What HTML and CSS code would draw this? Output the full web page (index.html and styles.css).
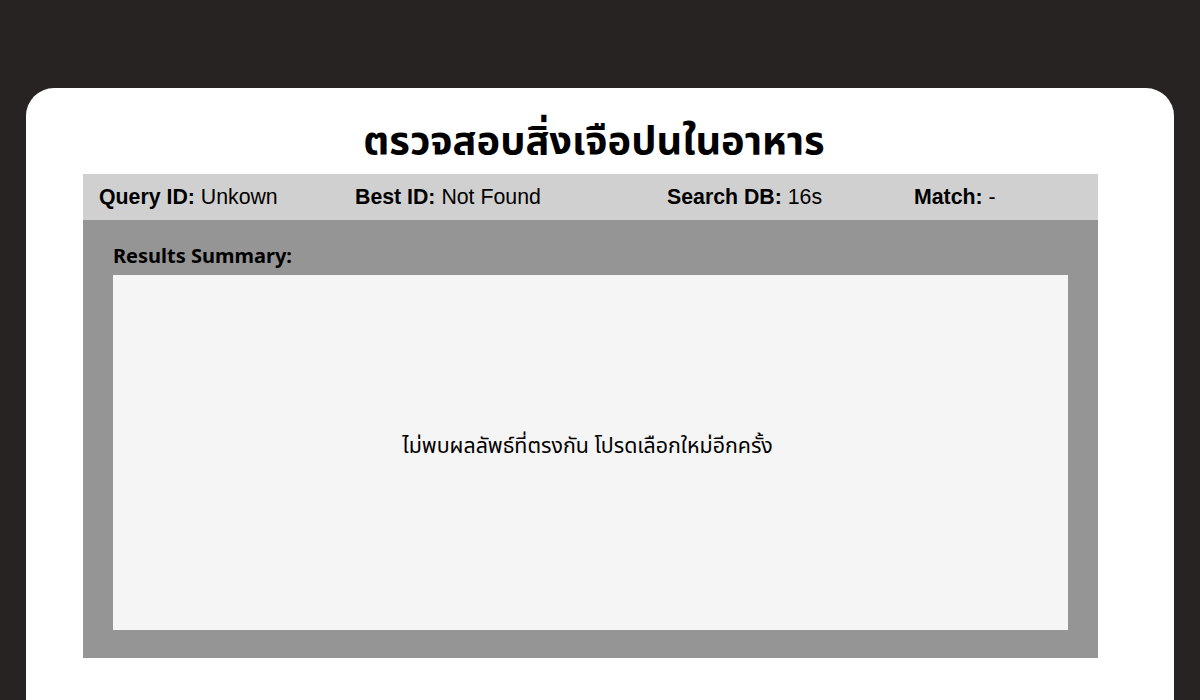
FILE: index.html
```html
<!DOCTYPE html>
<html lang="th">
<head>
<meta charset="utf-8">
<title>ตรวจสอบสิ่งเจือปนในอาหาร</title>
<link rel="stylesheet" href="styles.css">
</head>
<body>
<main class="card">
  <h1 class="title">ตรวจสอบสิ่งเจือปนในอาหาร</h1>
  <section class="result">
    <div class="info-bar">
      <div class="info"><b>Query ID:</b> Unkown</div>
      <div class="info"><b>Best ID:</b> Not Found</div>
      <div class="info"><b>Search DB:</b> 16s</div>
      <div class="info"><b>Match:</b> -</div>
    </div>
    <div class="summary">
      <h2 class="summary-label">Results Summary:</h2>
      <div class="summary-box">
        <p class="message">ไม่พบผลลัพธ์ที่ตรงกัน โปรดเลือกใหม่อีกครั้ง</p>
      </div>
    </div>
  </section>
</main>
</body>
</html>
```

FILE: styles.css
```css
html, body {
  margin: 0;
  padding: 0;
}
body {
  background: #262322;
  height: 700px;
  overflow: hidden;
  padding: 88px 26px 0 26px;
  box-sizing: border-box;
  font-family: "Noto Sans", "Noto Sans Thai", sans-serif;
}
.card {
  background: #ffffff;
  border-radius: 28px;
  height: 612px;
  border-bottom-left-radius: 0;
  border-bottom-right-radius: 0;
  padding: 21px 76px 0 57px;
  box-sizing: border-box;
}
.title {
  margin: 0 0 5px 0;
  text-align: center;
  font-size: 39.8px;
  font-weight: 700;
  line-height: 59px;
  color: #000;
  padding-left: 7px;
  padding-bottom: 1px;
}
.result {
  background: #959595;
  padding-bottom: 28px;
}
.info-bar {
  background: #d0d0d0;
  height: 46px;
  display: grid;
  grid-template-columns: 256px 312px 247px 1fr;
  align-items: center;
  padding-left: 16px;
  font-family: "Liberation Sans", Arial, sans-serif;
  font-size: 21.3px;
  color: #000;
}
.info b {
  font-weight: 700;
}
.summary {
  padding: 21px 30px 0 30px;
}
.summary-label {
  margin: 0 0 4px 0;
  font-size: 20px;
  font-weight: 700;
  line-height: 30px;
  color: #000;
}
.summary-box {
  background: #f5f5f5;
  height: 355px;
  display: flex;
  align-items: center;
  justify-content: center;
  padding-bottom: 12px;
  box-sizing: border-box;
}
.message {
  margin: 0;
  font-size: 21.4px;
  color: #000;
  padding-right: 6px;
}
```
